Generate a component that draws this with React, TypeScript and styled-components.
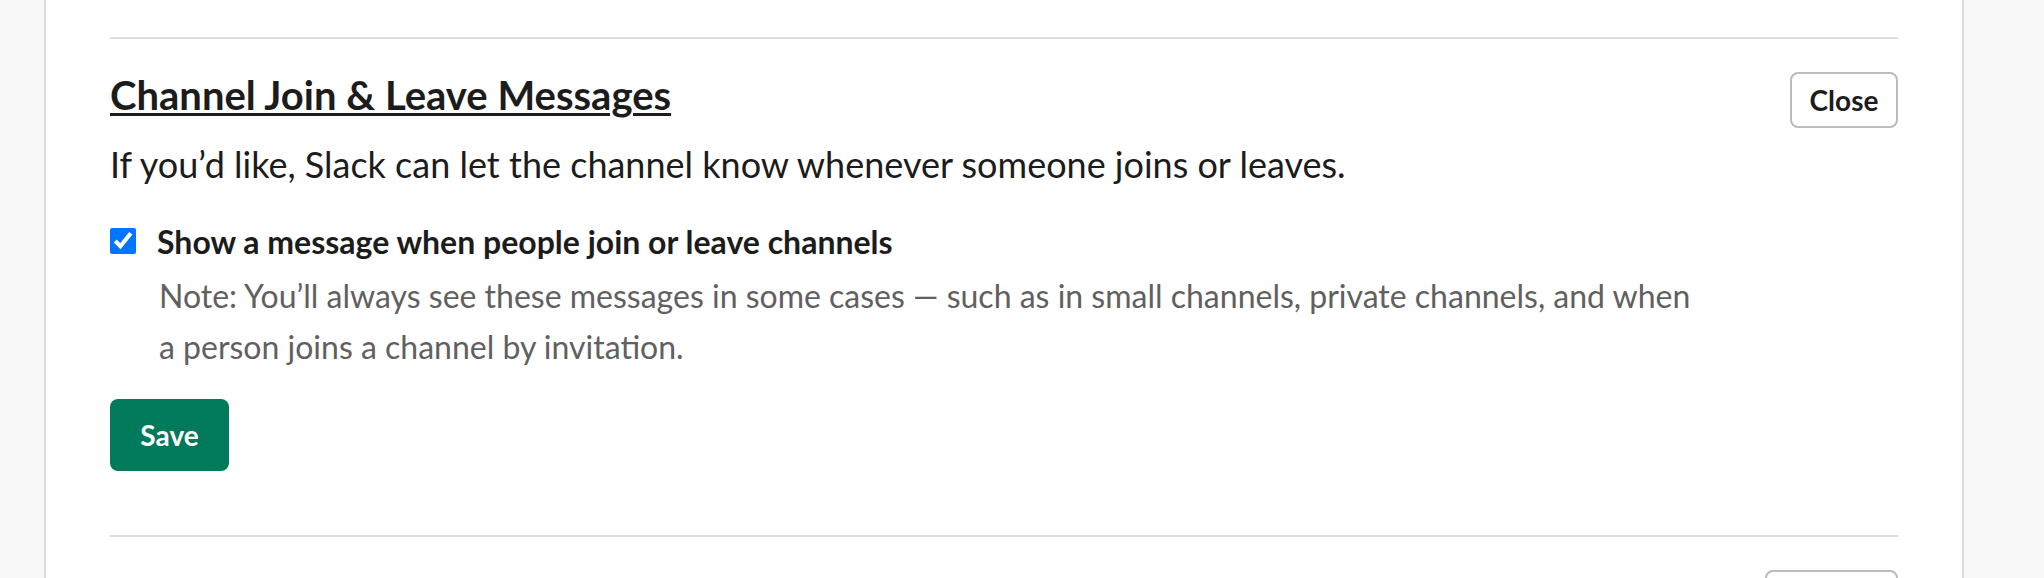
import React, { FunctionComponent, useState } from 'react';
import styled, { createGlobalStyle } from 'styled-components';

const GlobalStyle = createGlobalStyle`
    html, body {
        margin: 0;
        padding: 0;
        overflow: hidden;
        background: #f8f8f8;
    }

    body {
        font-family: 'Lato', 'Noto Sans', sans-serif;
        color: #1d1c1d;
        -webkit-font-smoothing: antialiased;
    }
`;

const Page = styled.div`
    display: flex;
    padding: 0 80px 0 44px;
    min-height: 100vh;
    box-sizing: border-box;
`;

const Panel = styled.div`
    flex: 1;
    background: #ffffff;
    border-left: 2px solid #dddddd;
    border-right: 2px solid #dddddd;
    padding: 37px 64px 0 64px;
`;

const Section = styled.section`
    border-top: 2px solid #dddddd;
    padding: 32px 0 64px 0;
`;

const Header = styled.div`
    display: flex;
    justify-content: space-between;
    align-items: flex-start;
`;

const Title = styled.h2`
    margin: 0;
    font-size: 40px;
    font-weight: 700;
    line-height: 48px;
    text-decoration: underline;
    text-decoration-thickness: 3px;
    text-underline-offset: 3px;
`;

const Description = styled.p`
    margin: 10px 0 0 0;
    font-size: 36px;
    line-height: 52px;
`;

const OutlineButton = styled.button<{ width: number }>`
    width: ${(p) => p.width}px;
    height: 56px;
    margin-top: 1px;
    background: #ffffff;
    border: 2px solid #bbbbbb;
    border-radius: 8px;
    font-family: inherit;
    font-size: 28px;
    font-weight: 700;
    color: #1d1c1d;
    cursor: pointer;
    flex-shrink: 0;
`;

const OptionRow = styled.label`
    display: flex;
    align-items: flex-start;
    gap: 21px;
    margin-top: 30px;
    cursor: pointer;
`;

const Checkbox = styled.input`
    width: 26px;
    height: 26px;
    margin: 8px 0 0 0;
    accent-color: #0075ff;
    flex-shrink: 0;
`;

const OptionLabel = styled.span`
    font-size: 32px;
    font-weight: 700;
    line-height: 44px;
`;

const Note = styled.p`
    margin: 6px 0 0 49px;
    max-width: 1545px;
    font-size: 32px;
    line-height: 51px;
    color: #616061;
`;

const SaveButton = styled.button`
    display: block;
    margin-top: 27px;
    width: 119px;
    height: 72px;
    border: none;
    border-radius: 8px;
    background: #007a5a;
    color: #ffffff;
    font-family: inherit;
    font-size: 28px;
    font-weight: 700;
    cursor: pointer;
`;

const NextHeader = styled(Header)`
    justify-content: flex-end;
`;

const App: FunctionComponent = () => {
    const [showMessages, setShowMessages] = useState(true);

    return (
        <>
            <GlobalStyle />
            <Page>
                <Panel>
                    <Section>
                        <Header>
                            <Title>Channel Join &amp; Leave Messages</Title>
                            <OutlineButton width={108}>Close</OutlineButton>
                        </Header>
                        <Description>
                            If you’d like, Slack can let the channel know
                            whenever someone joins or leaves.
                        </Description>
                        <OptionRow>
                            <Checkbox
                                type="checkbox"
                                checked={showMessages}
                                onChange={(e) =>
                                    setShowMessages(e.target.checked)
                                }
                            />
                            <OptionLabel>
                                Show a message when people join or leave
                                channels
                            </OptionLabel>
                        </OptionRow>
                        <Note>
                            Note: You’ll always see these messages in some
                            cases — such as in small channels, private
                            channels, and when a person joins a channel by
                            invitation.
                        </Note>
                        <SaveButton>Save</SaveButton>
                    </Section>
                    <Section>
                        <NextHeader>
                            <OutlineButton width={133}>Expand</OutlineButton>
                        </NextHeader>
                    </Section>
                </Panel>
            </Page>
        </>
    );
};

export default App;
